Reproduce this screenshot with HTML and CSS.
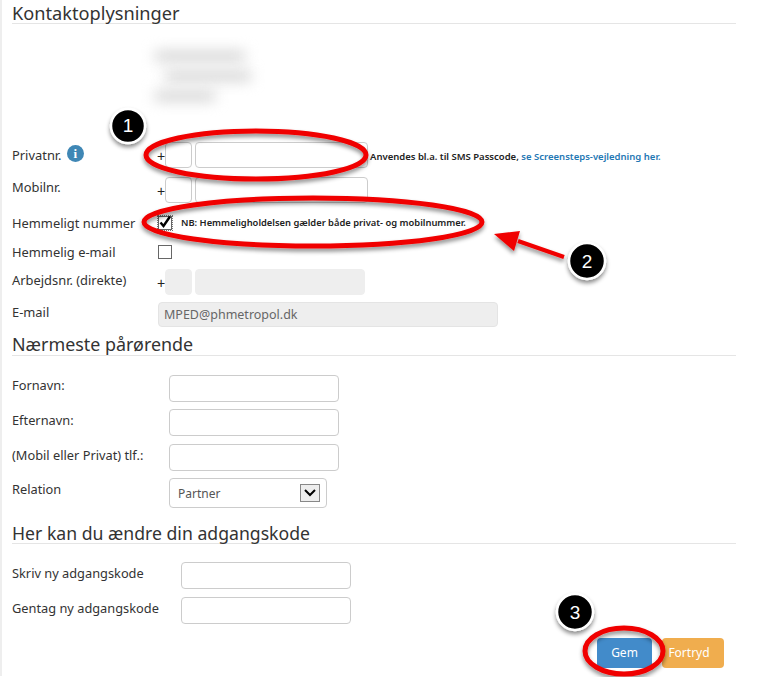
FILE: index.html
```html
<!DOCTYPE html>
<html lang="da">
<head>
<meta charset="utf-8">
<title>Kontaktoplysninger</title>
<link rel="stylesheet" href="styles.css">
</head>
<body>
<main class="page">
  <h2 class="heading first">Kontaktoplysninger</h2>
  <div class="address">
    <div class="blur b1"></div>
    <div class="blur b2"></div>
    <div class="blur b3"></div>
  </div>

  <div class="row r-priv">
    <label class="label">Privatnr. <span class="info">i</span></label>
    <span class="plus">+</span>
    <span class="input cc"></span>
    <span class="input num"></span>
    <span class="note">Anvendes bl.a. til SMS Passcode, <a class="link">se Screensteps-vejledning her.</a></span>
  </div>
  <div class="row r-mob">
    <label class="label">Mobilnr.</label>
    <span class="plus">+</span>
    <span class="input cc"></span>
    <span class="input num"></span>
  </div>
  <div class="row r-secret">
    <label class="label">Hemmeligt nummer</label>
    <span class="check checked">
      <svg viewBox="0 0 14 14" width="14" height="14"><path d="M2.5 7.5 L5.5 11 L12 1.5" fill="none" stroke="#000" stroke-width="2.4"/></svg>
    </span>
    <span class="note nb">NB: Hemmeligholdelsen gælder både privat- og mobilnummer.</span>
  </div>
  <div class="row r-secmail">
    <label class="label">Hemmelig e-mail</label>
    <span class="check"></span>
  </div>
  <div class="row r-work">
    <label class="label">Arbejdsnr. (direkte)</label>
    <span class="plus">+</span>
    <span class="input cc off"></span>
    <span class="input num short off"></span>
  </div>
  <div class="row r-mail">
    <label class="label">E-mail</label>
    <span class="input mail off">MPED@phmetropol.dk</span>
  </div>

  <h2 class="heading second">Nærmeste pårørende</h2>
  <div class="row rel r1">
    <label class="label small">Fornavn:</label>
    <span class="input wide"></span>
  </div>
  <div class="row rel r2">
    <label class="label small">Efternavn:</label>
    <span class="input wide"></span>
  </div>
  <div class="row rel r3">
    <label class="label small spaced">(Mobil eller Privat) tlf.:</label>
    <span class="input wide"></span>
  </div>
  <div class="row rel r4">
    <label class="label small">Relation</label>
    <span class="input select">Partner
      <span class="arrow"><svg viewBox="0 0 20 17" width="20" height="17"><path d="M5 6 L10 11 L15 6" fill="none" stroke="#000" stroke-width="2"/></svg></span>
    </span>
  </div>

  <h2 class="heading third">Her kan du ændre din adgangskode</h2>
  <div class="row pw p1">
    <label class="label small">Skriv ny adgangskode</label>
    <span class="input wide"></span>
  </div>
  <div class="row pw p2">
    <label class="label small">Gentag ny adgangskode</label>
    <span class="input wide"></span>
  </div>

  <div class="actions">
    <button class="btn save" type="button">Gem</button>
    <button class="btn cancel" type="button">Fortryd</button>
  </div>
</main>

<svg class="overlay" viewBox="0 0 758 677" width="758" height="677">
  <defs>
    <filter id="sh" x="-30%" y="-30%" width="160%" height="170%">
      <feDropShadow dx="0" dy="3" stdDeviation="2" flood-color="#000" flood-opacity=".45"/>
    </filter>
  </defs>
  <g fill="none" stroke="#f00000" stroke-width="5" filter="url(#sh)">
    <ellipse cx="256" cy="155" rx="110" ry="24"/>
    <ellipse cx="313" cy="222" rx="169" ry="24"/>
    <ellipse cx="624" cy="651" rx="39" ry="23"/>
  </g>
  <g filter="url(#sh)">
    <path d="M564 257 L518 241" stroke="#f00000" stroke-width="4" fill="none"/>
    <path d="M494 234 L520 231 L514 251 Z" fill="#f00000"/>
  </g>
  <g filter="url(#sh)" fill="#000" stroke="#fff" stroke-width="2.5">
    <circle cx="128" cy="126" r="17"/>
    <circle cx="587" cy="261" r="18"/>
    <circle cx="575" cy="612" r="18"/>
  </g>
  <g class="digit">
    <text x="128" y="132" text-anchor="middle">1</text>
    <text x="587" y="268" text-anchor="middle">2</text>
    <text x="575" y="619" text-anchor="middle">3</text>
  </g>
</svg>
</body>
</html>
```
FILE: styles.css
```css
* { box-sizing: border-box; }
html, body { margin: 0; padding: 0; background: #fff; }
body {
  width: 758px;
  height: 677px;
  overflow: hidden;
  position: relative;
  font-family: "Noto Sans", "Open Sans", sans-serif;
  color: #333;
}
.page {
  width: 736px;
  height: 677px;
  padding-left: 10px;
  border-left: 2px solid #eee;
}
.heading {
  margin: 0;
  font-size: 17.9px;
  font-weight: 400;
  line-height: 28px;
  height: 25px;
  border-bottom: 1px solid #e5e5e5;
  color: #333;
  white-space: nowrap;
}
.heading.first { margin-top: -1px; font-size: 18.2px; }
.heading.second { margin-top: 1px; height: 26px; }
.heading.third { margin-top: 11px; height: 25px; font-size: 17.65px; }

.address { height: 118px; position: relative; padding: 27px 0 0 143px; }
.blur { height: 10px; background: #d2d2d2; filter: blur(7px); margin-bottom: 10px; }
.b1 { width: 90px; }
.b2 { width: 86px; margin-left: 10px; }
.b3 { width: 60px; }

.row { display: flex; align-items: flex-start; position: relative; white-space: nowrap; }
.label { font-size: 12.9px; line-height: 18px; color: #333; display: block; flex: none; }
.small { font-size: 12.8px; }
.spaced { font-size: 12.8px; }

.input {
  display: block;
  flex: none;
  height: 26px;
  border: 1px solid #ccc;
  border-radius: 4px;
  background: #fff;
}
.off { background: #eee; border-color: #eee; }
.cc { width: 27px; }
.num { width: 173px; margin-left: 3px; }
.short { width: 170px; }
.plus { width: 8px; font: 400 14px/29px "Liberation Sans", sans-serif; color: #222; flex: none; margin-left: -1px; }

.r-priv { height: 35px; padding-left: 146px; }
.r-mob { height: 39px; padding-left: 146px; }
.r-secret { height: 29px; padding-left: 146px; }
.r-secmail { height: 24px; padding-left: 146px; }
.r-work { height: 33px; padding-left: 146px; }
.r-mail { height: 27px; padding-left: 146px; }
.row .label { position: absolute; left: 0; }
.r-priv .label { top: 3px; }
.r-mob .label { top: 1px; }
.r-secret .label { top: -2px; }
.r-secmail .label { top: -2px; }
.r-work .label { top: 2px; }
.r-mail .label { top: 1px; }

.info {
  display: inline-block;
  width: 17px;
  height: 17px;
  margin-left: 2px;
  border-radius: 50%;
  background: #3f87b5;
  color: #fff;
  font: 700 13px/17px "Liberation Serif", serif;
  text-align: center;
  vertical-align: 2px;
}
.note {
  font-size: 9.5px;
  line-height: 12px;
  font-weight: 600;
  color: #222;
  margin: 9px 0 0 2px;
}
.link { color: #1f78b4; }
.nb { margin: 1px 0 0 9px; font-size: 9.35px; }

.check {
  display: block;
  flex: none;
  width: 14px;
  height: 14px;
  border: 1px solid #666;
  background: #fff;
}
.check svg { display: block; margin: -2px 0 0 -1px; }
.checked { outline: 1px dotted #777; outline-offset: 0; margin-top: 0; }

.mail {
  width: 340px;
  height: 25px;
  padding: 0 5px;
  font-size: 12.5px;
  line-height: 23px;
  color: #666;
  border-color: #e4e4e4;
}

.rel { padding-left: 157px; }
.r1 { margin-top: 19px; height: 34px; }
.r2 { height: 35px; }
.r3 { height: 34px; }
.r4 { height: 30px; }
.rel .label { top: 1px; }
.rel.r2 .label { top: 2px; }
.rel.r3 .label { top: 2px; }
.rel.r4 .label { top: 2px; }
.wide { width: 170px; height: 27px; }
.select {
  position: relative;
  width: 158px;
  height: 30px;
  padding-left: 8px;
  font-size: 12px;
  line-height: 29px;
  color: #555;
}
.arrow {
  position: absolute;
  left: 130px;
  top: 5px;
  width: 20px;
  height: 18px;
  border: 1px solid #888;
  background: #eee;
}
.arrow svg { display: block; margin: -1px 0 0 -1px; }

.pw { padding-left: 169px; height: 35px; }
.p1 { margin-top: 18px; }
.pw .label { top: 2px; }

.actions {
  display: flex;
  gap: 10px;
  margin: 6px 0 0 585px;
  width: 127px;
}
.btn {
  flex: none;
  height: 30px;
  border: 0;
  border-radius: 4px;
  color: #fff;
  font: 400 12px/30px "Noto Sans", sans-serif;
  padding: 0;
}
.save { width: 55px; background: #428bca; }
.cancel { width: 62px; background: #f0ad4e; padding-right: 8px; }

.overlay { position: absolute; left: 0; top: 0; pointer-events: none; }
.digit text { font: 400 19px "Liberation Sans", sans-serif; fill: #fff; }
```
